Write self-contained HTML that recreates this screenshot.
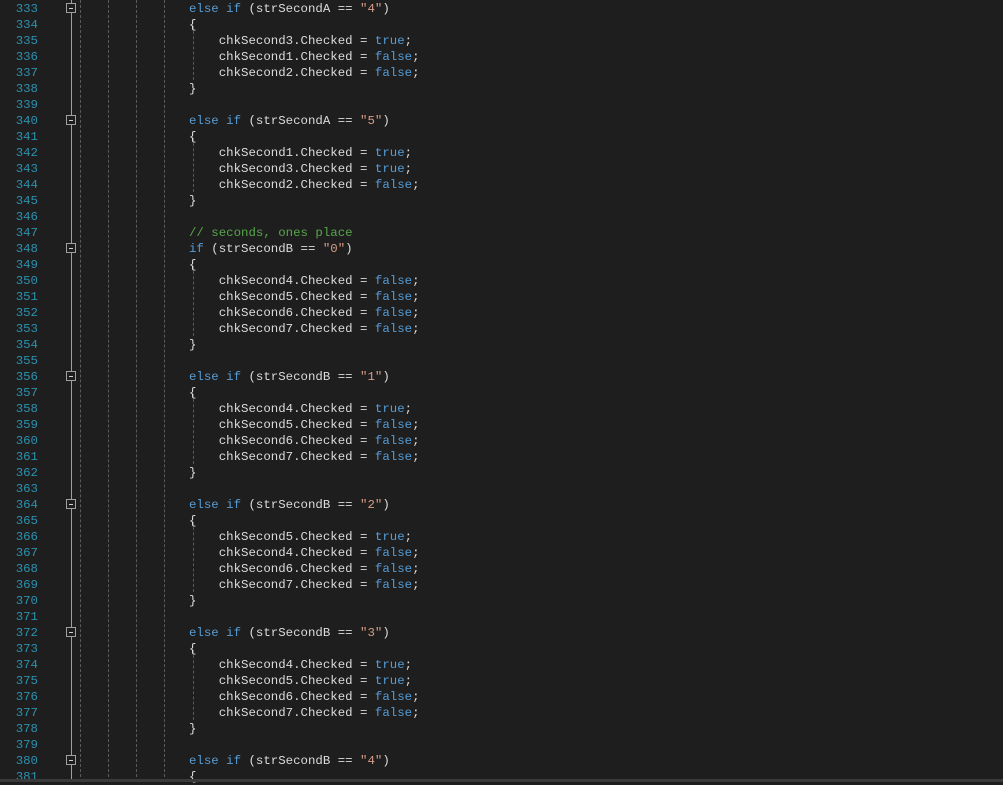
<!DOCTYPE html><html><head><meta charset="utf-8"><style>
body{margin:0;background:#1e1e1e;width:1003px;height:782px;overflow:hidden;position:relative;font-family:"Liberation Mono",monospace;font-size:12.4px}
.ln{position:absolute;left:0;width:38px;text-align:right;color:#2b91af;line-height:16px;top:1px;white-space:pre}
.code{position:absolute;left:189px;top:1px;color:#dcdcdc;white-space:pre;margin:0;font-family:"Liberation Mono",monospace;font-size:12.4px;line-height:16px}
.k{color:#569cd6}.s{color:#d69d85}.c{color:#57a64a}
.g{position:absolute;top:0;height:782px;width:0;border-left:1px dashed #5a5a5a}
.gl{position:absolute;left:71px;top:0;height:782px;width:1px;background:#a0a0a0}
.fb{position:absolute;left:66px;width:8px;height:8px;border:1px solid #a0a0a0;background:#1e1e1e}
.fb:after{content:"";position:absolute;left:2px;top:3.5px;width:4px;height:1px;background:#d0d0d0}
.ig{position:absolute;left:193px;width:0;border-left:1px dashed #5a5a5a}
.bot{position:absolute;left:0;top:779px;width:1003px;height:3px;background:#3a3a3a}
</style></head><body>
<div class="gl"></div>
<div class="g" style="left:80px"></div><div class="g" style="left:108px"></div><div class="g" style="left:136px"></div><div class="g" style="left:164px"></div>
<div class="fb" style="top:3px"></div><div class="fb" style="top:115px"></div><div class="fb" style="top:243px"></div><div class="fb" style="top:371px"></div><div class="fb" style="top:499px"></div><div class="fb" style="top:627px"></div><div class="fb" style="top:755px"></div>
<div class="ig" style="top:26px;height:54px"></div><div class="ig" style="top:138px;height:54px"></div><div class="ig" style="top:266px;height:70px"></div><div class="ig" style="top:394px;height:70px"></div><div class="ig" style="top:522px;height:70px"></div><div class="ig" style="top:650px;height:70px"></div>
<div class="ln">333
334
335
336
337
338
339
340
341
342
343
344
345
346
347
348
349
350
351
352
353
354
355
356
357
358
359
360
361
362
363
364
365
366
367
368
369
370
371
372
373
374
375
376
377
378
379
380
381</div>
<pre class="code"><span class="k">else if</span> (strSecondA == <span class="s">"4"</span>)
{
    chkSecond3.Checked = <span class="k">true</span>;
    chkSecond1.Checked = <span class="k">false</span>;
    chkSecond2.Checked = <span class="k">false</span>;
}

<span class="k">else if</span> (strSecondA == <span class="s">"5"</span>)
{
    chkSecond1.Checked = <span class="k">true</span>;
    chkSecond3.Checked = <span class="k">true</span>;
    chkSecond2.Checked = <span class="k">false</span>;
}

<span class="c">// seconds, ones place</span>
<span class="k">if</span> (strSecondB == <span class="s">"0"</span>)
{
    chkSecond4.Checked = <span class="k">false</span>;
    chkSecond5.Checked = <span class="k">false</span>;
    chkSecond6.Checked = <span class="k">false</span>;
    chkSecond7.Checked = <span class="k">false</span>;
}

<span class="k">else if</span> (strSecondB == <span class="s">"1"</span>)
{
    chkSecond4.Checked = <span class="k">true</span>;
    chkSecond5.Checked = <span class="k">false</span>;
    chkSecond6.Checked = <span class="k">false</span>;
    chkSecond7.Checked = <span class="k">false</span>;
}

<span class="k">else if</span> (strSecondB == <span class="s">"2"</span>)
{
    chkSecond5.Checked = <span class="k">true</span>;
    chkSecond4.Checked = <span class="k">false</span>;
    chkSecond6.Checked = <span class="k">false</span>;
    chkSecond7.Checked = <span class="k">false</span>;
}

<span class="k">else if</span> (strSecondB == <span class="s">"3"</span>)
{
    chkSecond4.Checked = <span class="k">true</span>;
    chkSecond5.Checked = <span class="k">true</span>;
    chkSecond6.Checked = <span class="k">false</span>;
    chkSecond7.Checked = <span class="k">false</span>;
}

<span class="k">else if</span> (strSecondB == <span class="s">"4"</span>)
{</pre>
<div class="bot"></div>
</body></html>
